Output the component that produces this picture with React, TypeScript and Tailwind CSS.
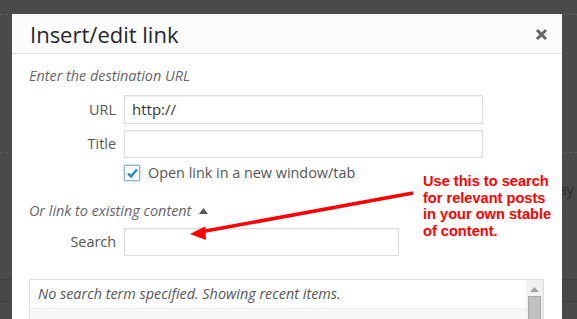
import React from "react";

export default function App() {
  const sans = { fontFamily: '"Open Sans", "Noto Sans", sans-serif' };
  return (
    <div className="relative w-[577px] h-[319px] overflow-hidden bg-[#4a4a4a]" style={sans}>
      {/* underlying page hints */}
      <div className="absolute left-0 right-0 top-[14px] border-t border-dashed border-[#5e5e5e]" />
      <div className="absolute left-0 right-0 top-[152px] border-t border-dashed border-[#5e5e5e]" />
      <div className="absolute left-0 right-0 top-[279px] h-[23px] border-y border-[#404040] bg-[#474747]" />
      <div className="absolute left-[559px] top-[180px] text-[14px] leading-[20px] text-[#2c2c2c]">ay</div>

      {/* modal */}
      <div className="absolute left-[12px] top-[14px] w-[550px] h-[310px] bg-white flex flex-col">
        <div className="h-[40px] shrink-0 flex items-center justify-between pl-[18px] pr-[14px] bg-[#fcfcfc] border-b border-[#dddddd]">
          <div className="text-[22px] leading-[28px] text-[#23282d] pt-[1px]">Insert/edit link</div>
          <svg width="13" height="13" viewBox="0 0 13 13" className="mt-[1px]">
            <path d="M2 2 L11 11 M11 2 L2 11" stroke="#666" strokeWidth="3" strokeLinecap="butt" />
          </svg>
        </div>

        <div className="flex flex-col px-[17px] pt-[12px] text-[14.4px]">
          <div className="italic leading-[20px] text-[#666]">Enter the destination URL</div>

          <div className="flex items-center mt-[9px]">
            <div className="w-[88px] text-right text-[#555] pr-[1px]">URL</div>
            <div className="ml-[7px] w-[359px] h-[29px] border border-[#dddddd] flex items-center px-[7px] text-[15px] text-[#32373c] shadow-[inset_0_1px_2px_rgba(0,0,0,0.07)]">
              http://
            </div>
          </div>

          <div className="flex items-center mt-[6px]">
            <div className="w-[88px] text-right text-[#555] pr-[1px]">Title</div>
            <div className="ml-[7px] w-[359px] h-[28px] border border-[#dddddd] shadow-[inset_0_1px_2px_rgba(0,0,0,0.07)]" />
          </div>

          <div className="flex items-center mt-[5px] ml-[95px]">
            <div className="w-[16px] h-[16px] border border-[#8fb3cf] bg-white flex items-center justify-center shadow-[0_0_2px_rgba(30,140,190,0.6)]">
              <svg width="13" height="13" viewBox="0 0 13 13">
                <path d="M2 6.5 L5 9.5 L11 2.5" stroke="#1e8cbe" strokeWidth="2.4" fill="none" />
              </svg>
            </div>
            <div className="ml-[8px] leading-[20px] text-[#555]">Open link in a new window/tab</div>
          </div>

          <div className="flex items-center mt-[18px] italic leading-[20px] text-[#666]">
            <span>Or link to existing content</span>
            <svg width="9" height="6" viewBox="0 0 9 6" className="ml-[8px]">
              <path d="M0 6 L4.5 0 L9 6 Z" fill="#555" />
            </svg>
          </div>

          <div className="flex items-center mt-[7px]">
            <div className="w-[88px] text-right text-[#555] pr-[1px]">Search</div>
            <div className="ml-[7px] w-[275px] h-[28px] border border-[#dddddd] shadow-[inset_0_1px_2px_rgba(0,0,0,0.07)]" />
          </div>

          <div className="mt-[23px] w-[515px] h-[60px] border border-[#dddddd] flex">
            <div className="flex-1 flex flex-col">
              <div className="h-[29px] flex items-center pl-[8px] italic text-[#555] border-b border-[#f1f1f1]">
                No search term specified. Showing recent items.
              </div>
              <div className="flex-1 bg-[#f7f7f7]" />
            </div>
            <div className="w-[17px] bg-[#f1f1f1] flex flex-col items-center">
              <svg width="9" height="5" viewBox="0 0 9 5" className="mt-[7px]">
                <path d="M0 5 L4.5 0 L9 5 Z" fill="#a3a3a3" />
              </svg>
              <div className="mt-[4px] w-[13px] flex-1 bg-[#c1c1c1] border border-[#a8a8a8]" />
            </div>
          </div>
        </div>
      </div>

      {/* annotation */}
      <svg className="absolute left-0 top-0" width="577" height="319" viewBox="0 0 577 319">
        <line x1="413" y1="193" x2="200" y2="232" stroke="#f00" strokeWidth="3.5" />
        <path d="M190 234 L205 226.5 L206 240 Z" fill="#f00" />
      </svg>
      <div
        className="absolute left-[423px] top-[173px] text-[14.6px] leading-[16.7px] font-bold text-[#ff0000]"
        style={{ fontFamily: '"Liberation Sans", Arial, sans-serif' }}
      >
        <div>Use this to search</div>
        <div>for relevant posts</div>
        <div>in your own stable</div>
        <div>of content.</div>
      </div>
    </div>
  );
}
